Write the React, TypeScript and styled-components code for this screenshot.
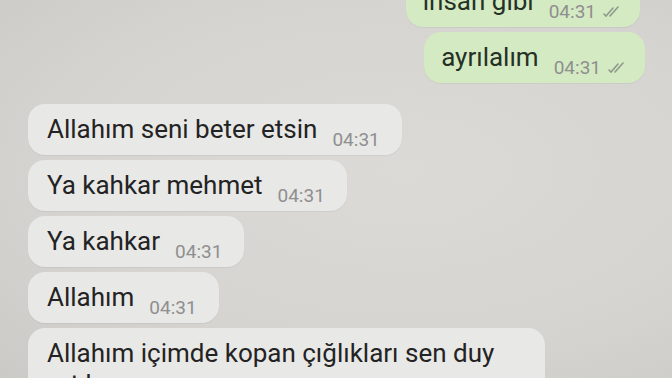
import React from 'react';
import styled, { createGlobalStyle } from 'styled-components';

const GlobalStyle = createGlobalStyle`
  html, body {
    margin: 0;
    padding: 0;
    background: #d6d5d2;
    overflow: hidden;
  }
  body {
    font-family: Roboto, "Noto Sans", "Liberation Sans", sans-serif;
  }
`;

const Screen = styled.div`
  width: 672px;
  height: 378px;
  overflow: hidden;
  background: radial-gradient(ellipse at 60% 45%, #dbdad7 0%, #d5d4d1 60%, #cbcac7 100%);
`;

const Thread = styled.div`
  display: flex;
  flex-direction: column;
  gap: 5px;
  margin-top: -24px;
  padding: 0 27px 0 28px;
`;

const Row = styled.div<{ $out?: boolean; $gapTop?: number }>`
  display: flex;
  justify-content: ${p => (p.$out ? 'flex-end' : 'flex-start')};
  margin-top: ${p => p.$gapTop ?? 0}px;
`;

const Bubble = styled.div<{ $out?: boolean; $shift?: number }>`
  background: ${p => (p.$out ? '#d4eac3' : '#e8e8e6')};
  color: ${p => (p.$out ? '#263126' : '#232323')};
  border-radius: 17px;
  padding: ${p => (p.$out ? '10px 18px 10px 17px' : '10px 22px 10px 19px')};
  margin-right: ${p => p.$shift ?? 0}px;
  max-width: 476px;
  font-size: 26px;
  line-height: 31px;
  box-shadow: 0 1px 1px rgba(0, 0, 0, 0.05);
`;

const Time = styled.span`
  display: inline-flex;
  align-items: center;
  gap: 6px;
  margin-left: 15px;
  position: relative;
  top: 8px;
  font-size: 19px;
  line-height: 17px;
  color: #8f8f8f;
`;

const Ticks = () => (
  <svg width="20" height="12" viewBox="0 0 20 12" fill="none" stroke="#8d9a8a" strokeWidth="1.6" strokeLinecap="round">
    <path d="M2 8 L4 10 L11 2" />
    <path d="M8 10 L16 1" />
  </svg>
);

interface Msg {
  text: string;
  out?: boolean;
}

const messages: Msg[] = [
  { text: 'insan gibi', out: true },
  { text: 'ayrılalım', out: true },
  { text: 'Allahım seni beter etsin' },
  { text: 'Ya kahkar mehmet' },
  { text: 'Ya kahkar' },
  { text: 'Allahım' },
];

const App: React.FC = () => {
  return (
    <Screen>
      <GlobalStyle />
      <Thread>
        {messages.map((m, i) => (
          <Row key={i} $out={m.out} $gapTop={i === 2 ? 16 : 0}>
            <Bubble $out={m.out} $shift={m.out && i === 0 ? 5 : 0}>
              {m.text}
              <Time>
                04:31
                {m.out && <Ticks />}
              </Time>
            </Bubble>
          </Row>
        ))}
        <Row>
          <Bubble>
            Allahım içimde kopan çığlıkları sen duy artık
          </Bubble>
        </Row>
      </Thread>
    </Screen>
  );
};

export default App;
